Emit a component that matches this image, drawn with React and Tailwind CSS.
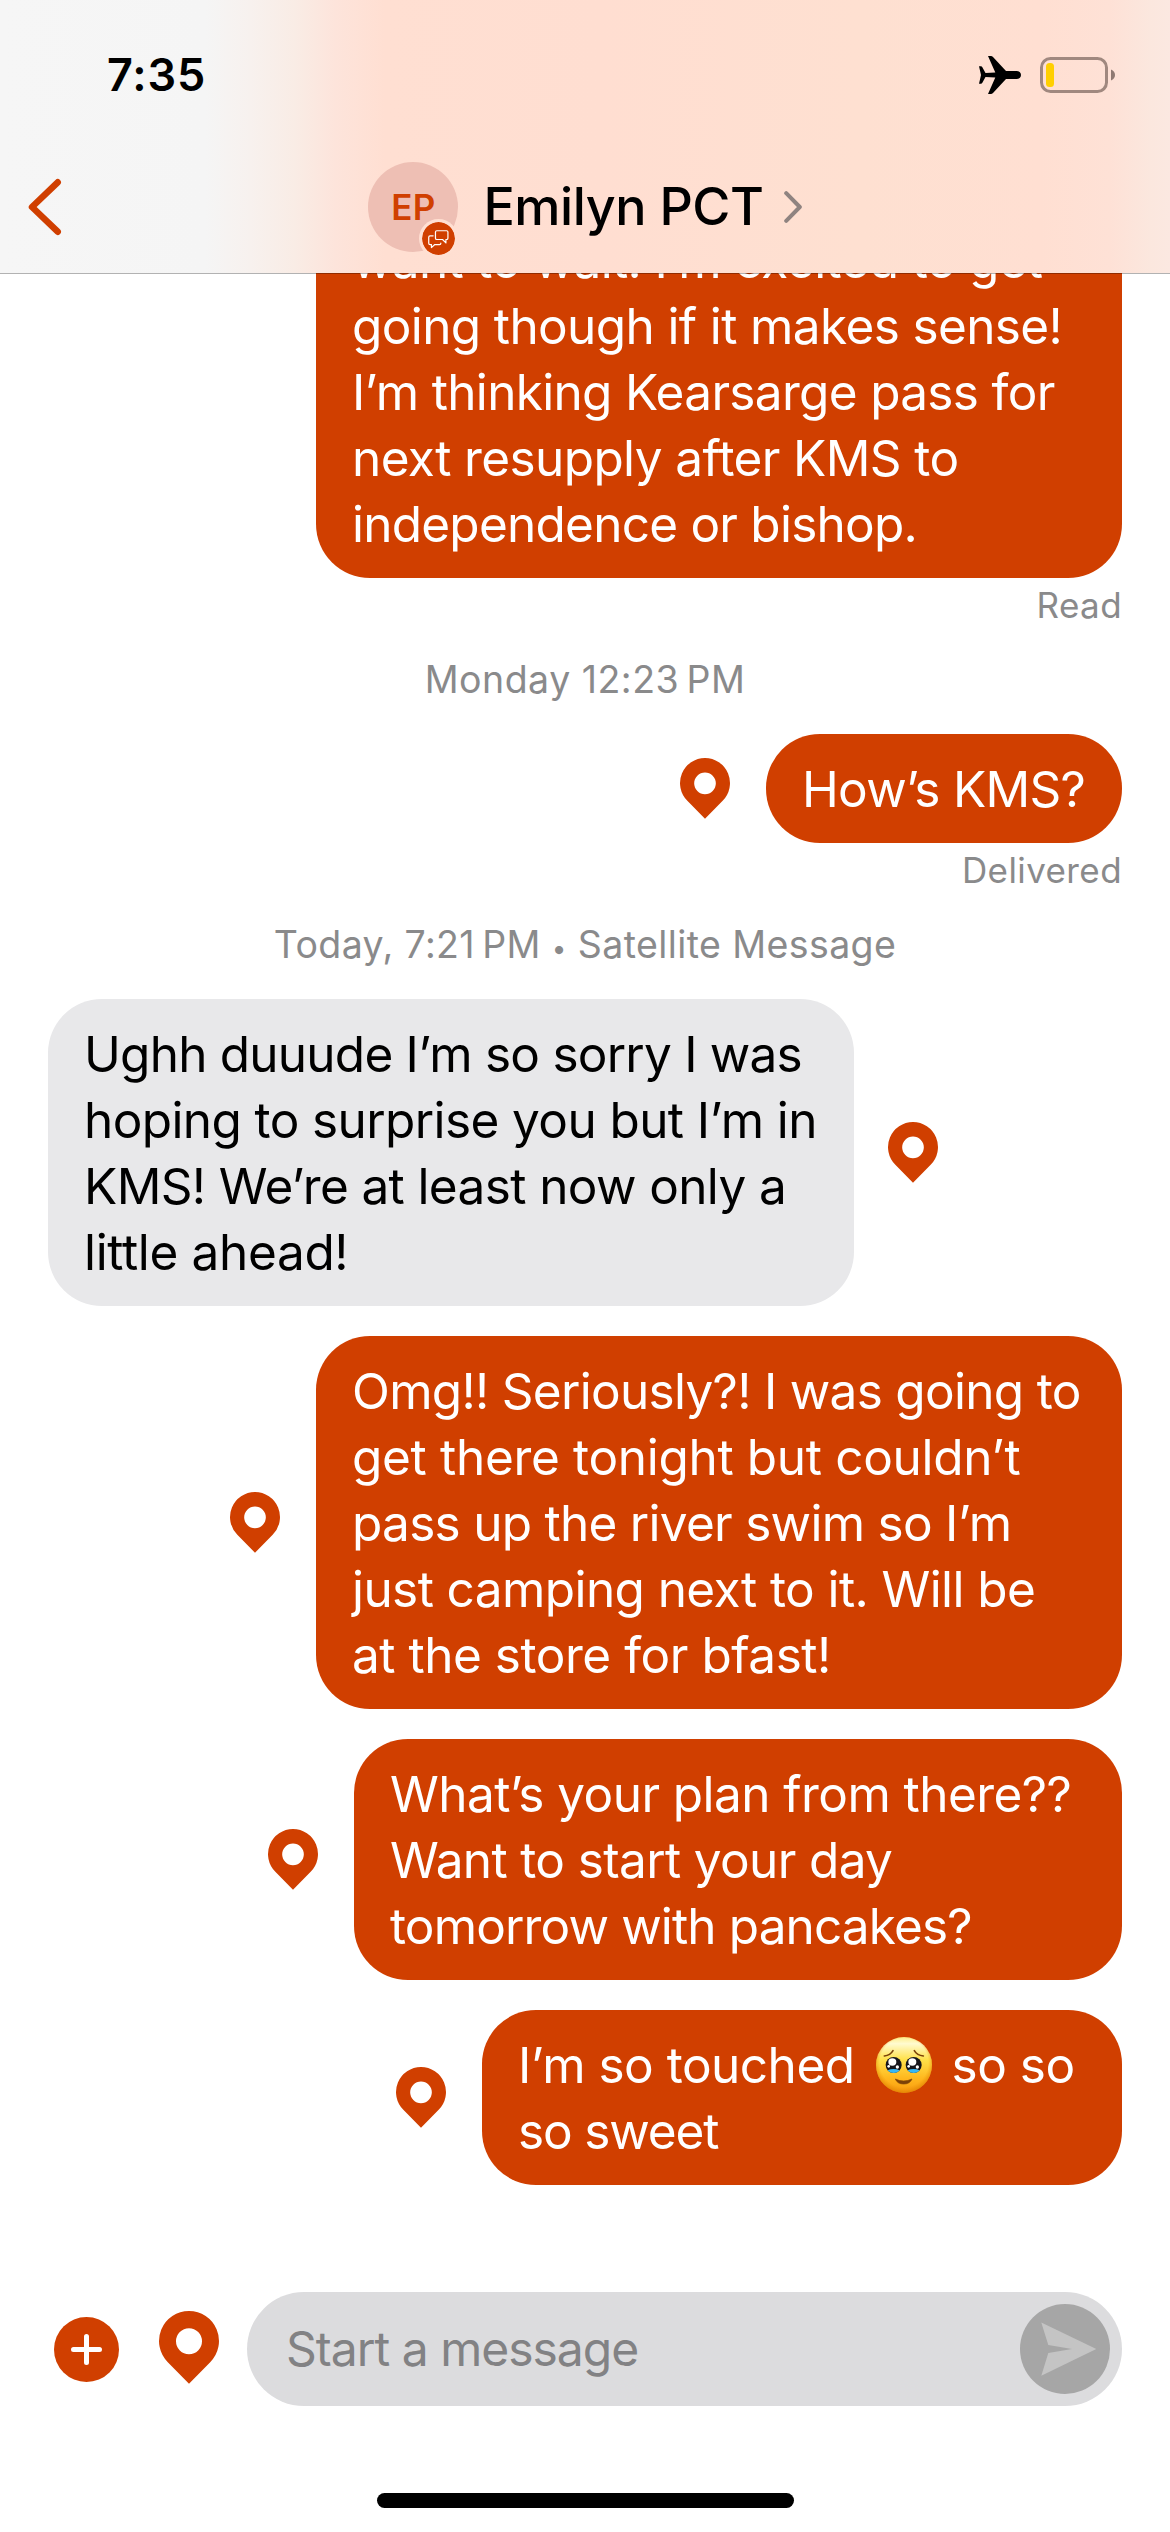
import React from 'react';
import clsx from 'clsx';

const messages = [
    {
        id: 1,
        mine: true,
        width: 'w-[806px]',
        status: 'Read',
        lines: [
            { text: 'want to wait! I’m excited to get', tracking: 'tracking-[-0.66px]' },
            { text: 'going though if it makes sense!', tracking: 'tracking-[-0.62px]' },
            { text: 'I’m thinking Kearsarge pass for', tracking: 'tracking-[-0.68px]' },
            { text: 'next resupply after KMS to', tracking: 'tracking-[-0.61px]' },
            { text: 'independence or bishop.', tracking: 'tracking-[-0.76px]' },
        ],
    },
    {
        id: 2,
        mine: true,
        pin: true,
        width: 'w-[356px]',
        stamp: ['Monday 12:23\u2009PM'],
        stampTracking: 'tracking-[0.5px]',
        status: 'Delivered',
        lines: [{ text: 'How’s KMS?', tracking: 'tracking-[-0.72px]' }],
    },
    {
        id: 3,
        mine: false,
        pin: true,
        width: 'w-[806px]',
        stamp: ['Today, 7:21\u2009PM', 'Satellite Message'],
        stampTracking: 'tracking-[0.4px]',
        lines: [
            { text: 'Ughh duuude I’m so sorry I was', tracking: 'tracking-[-0.77px]' },
            { text: 'hoping to surprise you but I’m in', tracking: 'tracking-[-0.6px]' },
            { text: 'KMS! We’re at least now only a', tracking: 'tracking-[-0.62px]' },
            { text: 'little ahead!', tracking: 'tracking-[-0.34px]' },
        ],
    },
    {
        id: 4,
        mine: true,
        pin: true,
        width: 'w-[806px]',
        lines: [
            { text: 'Omg!! Seriously?! I was going to', tracking: 'tracking-[-0.7px]' },
            { text: 'get there tonight but couldn’t', tracking: 'tracking-[-0.32px]' },
            { text: 'pass up the river swim so I’m', tracking: 'tracking-[-0.72px]' },
            { text: 'just camping next to it. Will be', tracking: 'tracking-[-0.58px]' },
            { text: 'at the store for bfast!', tracking: 'tracking-[-0.47px]' },
        ],
    },
    {
        id: 5,
        mine: true,
        pin: true,
        width: 'w-[768px]',
        lines: [
            { text: 'What’s your plan from there??', tracking: 'tracking-[-0.56px]' },
            { text: 'Want to start your day', tracking: 'tracking-[-0.63px]' },
            { text: 'tomorrow with pancakes?', tracking: 'tracking-[-0.86px]' },
        ],
    },
    {
        id: 6,
        mine: true,
        pin: true,
        width: 'w-[640px]',
        lines: [
            { text: 'I’m so touched', emoji: true, after: 'so so', tracking: 'tracking-[-0.5px]' },
            { text: 'so sweet', tracking: 'tracking-[-1.15px]' },
        ],
    },
];

const PinIcon = ({ className }) => (
    <svg viewBox="0 0 60 73" className={clsx('shrink-0', className)}>
        <path
            fill="#d03f00"
            fillRule="evenodd"
            d="M30 0A30 30 0 0 1 51.2 51.2L30 72.7L8.8 51.2A30 30 0 0 1 30 0ZM30 17.3a13 13 0 1 0 0 26a13 13 0 1 0 0-26Z"
        />
    </svg>
);

const PlaneIcon = () => (
    <svg viewBox="0 0 42 38" className="w-[42px] h-[38px]">
        <path d="M42 19C42 21.5 40 23 37.5 23H27L14 37Q13 38 12 38H9L16.3 21.6L6.5 21L3.2 27Q2.8 27.7 2 27.7H0L2 19L0 10.3H2Q2.8 10.3 3.2 11L6.5 17L16.3 16.4L9 0H12Q13 0 14 1L27 15H37.5C40 15 42 16.5 42 19Z" />
    </svg>
);

const BatteryIcon = () => (
    <svg viewBox="0 0 75 36" className="w-[75px] h-[36px]">
        <rect x="1.5" y="1.5" width="65" height="33" rx="9" fill="none" stroke="#a0887f" strokeWidth="3" />
        <rect x="6" y="6" width="8" height="24" rx="3.5" fill="#ffcf00" />
        <path d="M71 12.5C73.6 13.5 75 15.5 75 18s-1.4 4.5-4 5.5z" fill="#8f7a73" />
    </svg>
);

const ChatBadge = () => (
    <svg viewBox="0 0 98 98" className="w-[33px] h-[33px] rounded-full">
        <circle cx="49" cy="49" r="49" fill="#d03f00" />
        <g fill="none" stroke="#fff" strokeWidth="3.6" strokeLinejoin="round" strokeLinecap="round">
            <path d="M44 26h29q4 0 4 4v18q0 4-4 4h-2v10l-10-10h-17q-4 0-4-4v-18q0-4 4-4z" />
            <path d="M33 41h-9q-4 0-4 4v18q0 4 4 4h4v9l10-9h14q4 0 4-4" />
        </g>
    </svg>
);

const TearyFace = () => (
    <svg viewBox="0 0 168 168" className="w-[56px] h-[56px] ml-[21px] mr-[20px] shrink-0">
        <defs>
            <linearGradient id="face" x1="0" y1="0" x2="0" y2="1">
                <stop offset="0" stopColor="#ffee8a" />
                <stop offset="0.12" stopColor="#fffbd0" />
                <stop offset="0.4" stopColor="#ffe14a" />
                <stop offset="0.75" stopColor="#ffb61c" />
                <stop offset="1" stopColor="#f79a10" />
            </linearGradient>
            <radialGradient id="rim" cx="0.5" cy="0.46" r="0.54">
                <stop offset="0.8" stopColor="#e98a00" stopOpacity="0" />
                <stop offset="1" stopColor="#d87a00" stopOpacity="0.65" />
            </radialGradient>
            <clipPath id="leftEye"><circle cx="53" cy="84" r="24" /></clipPath>
            <clipPath id="rightEye"><circle cx="113" cy="84" r="24" /></clipPath>
        </defs>
        <circle cx="84" cy="84" r="84" fill="url(#face)" />
        <circle cx="84" cy="84" r="84" fill="url(#rim)" />
        <g fill="none" stroke="#7b4208" strokeWidth="5" strokeLinecap="round">
            <path d="M25 57Q43 55 51 41" />
            <path d="M142 57Q123 55 115 41" />
        </g>
        <circle cx="53" cy="84" r="24" fill="#15151c" />
        <circle cx="113" cy="84" r="24" fill="#15151c" />
        <g clipPath="url(#leftEye)">
            <ellipse cx="53" cy="108" rx="25" ry="12" fill="#37b8f5" />
        </g>
        <g clipPath="url(#rightEye)">
            <ellipse cx="113" cy="108" rx="25" ry="12" fill="#37b8f5" />
        </g>
        <g fill="#fff">
            <ellipse cx="49" cy="75" rx="12" ry="11" />
            <circle cx="64" cy="90" r="5" />
            <circle cx="38" cy="88" r="4" />
            <ellipse cx="109" cy="75" rx="12" ry="11" />
            <circle cx="124" cy="90" r="5" />
            <circle cx="98" cy="88" r="4" />
        </g>
        <path d="M58 126Q83 138 108 126Q102 141 83 141Q64 141 58 126Z" fill="#7b4208" stroke="#7b4208" strokeWidth="2" strokeLinejoin="round" />
    </svg>
);

const Header = () => (
    <header className="relative z-10 h-[273px] shrink-0 bg-[linear-gradient(90deg,#f6f6f6_0px,#f5f5f5_205px,#f7f1ee_250px,#f9ece5_295px,#fde4db_335px,#ffdfd2_385px,#ffded1_600px,#fee0d1_860px,#ffdfd2_1040px,#fee1d6_1110px,#fbe7de_1150px,#fbe8e1_1170px)] shadow-[0_1px_0_rgba(0,0,0,0.3)]">
        {/* Status bar */}
        <div className="flex h-[149px] items-center justify-between pl-[107px] pr-[55px]">
            <span className="text-[45px] leading-[60px] font-semibold tracking-[0.87px]">7:35</span>
            <div className="flex items-center gap-[19px]">
                <PlaneIcon />
                <BatteryIcon />
            </div>
        </div>

        {/* Contact */}
        <div className="grid h-[116px] grid-cols-[120px_1fr_120px] items-center">
            <svg viewBox="0 0 34 58" className="ml-[28px] w-[34px] h-[58px]" fill="none" stroke="#d03f00" strokeWidth="6.5" strokeLinecap="round" strokeLinejoin="round">
                <path d="M29.7 4.3L4 29L29.7 53.7" />
            </svg>
            <div className="flex items-center justify-center">
                <div className="relative flex h-[90px] w-[90px] items-center justify-center rounded-full bg-[#eebfb4]">
                    <span className="text-[35px] leading-[42px] font-semibold tracking-[0.3px] text-[#d03f00]">EP</span>
                    <div className="absolute top-[57px] left-[51px] rounded-full bg-[#ffe0d3] p-[3px]">
                        <ChatBadge />
                    </div>
                </div>
                <h1 className="ml-[25px] text-[52px] leading-[64px] font-medium tracking-[-0.45px]">Emilyn PCT</h1>
                <svg viewBox="0 0 18 32" className="ml-[20px] w-[18px] h-[32px]" fill="none" stroke="#8f8380" strokeWidth="4" strokeLinecap="round" strokeLinejoin="round">
                    <path d="M2.2 2.2L15.8 16L2.2 29.8" />
                </svg>
            </div>
        </div>
    </header>
);

const Message = ({ message }) => {
    const { mine, pin, width, lines, stamp, stampTracking, status } = message;

    return (
        <div className={clsx(!stamp && 'mt-[30px]')}>
            {stamp && (
                <p className={clsx('my-[31px] h-[46px] text-center text-[37.5px] leading-[46px] text-[#8a8a8b]', stampTracking)}>
                    {stamp[0]}
                    {stamp[1] && <> <span className="text-[26px] leading-none">•</span> {stamp[1]}</>}
                </p>
            )}
            <div className={clsx('flex items-center', mine ? 'justify-end gap-[36px]' : 'flex-row-reverse justify-end gap-[34px]')}>
                {pin && <PinIcon className="w-[50px] h-[61px]" />}
                <div
                    className={clsx(
                        'rounded-[54px] px-[36px] py-[21.5px] text-[49.5px] leading-[66px] whitespace-nowrap',
                        width,
                        mine ? 'bg-[#d03f00] text-white' : 'bg-[#e8e8ea] text-black'
                    )}
                >
                    {lines.map(line => (
                        <p key={line.text} className={clsx('flex h-[66px] items-center', line.tracking)}>
                            <span>{line.text}</span>
                            {line.emoji && <TearyFace />}
                            {line.after && <span>{line.after}</span>}
                        </p>
                    ))}
                </div>
            </div>
            {status && (
                <p className="mt-[6px] text-right text-[35px] leading-[42px] tracking-[0.4px] text-[#8a8a8b]">{status}</p>
            )}
        </div>
    );
};

const Composer = () => (
    <footer className="shrink-0">
        <div className="flex h-[114px] items-center pr-[48px] pl-[54px]">
            <svg viewBox="0 0 65 65" className="w-[65px] h-[65px]">
                <circle cx="32.5" cy="32.5" r="32.5" fill="#d03f00" />
                <path d="M32.5 19.5v26M19.5 32.5h26" stroke="#fff" strokeWidth="5" strokeLinecap="round" />
            </svg>
            <PinIcon className="mb-[3px] ml-[40px] w-[60px] h-[73px]" />
            <div className="ml-[28px] flex h-[114px] flex-1 items-center justify-between rounded-full bg-[#dcdcde] pr-[12px] pl-[39px]">
                <span className="text-[48px] leading-[60px] tracking-[-1px] text-[#828284]">Start a message</span>
                <svg viewBox="0 0 90 90" className="w-[90px] h-[90px]">
                    <circle cx="45" cy="45" r="45" fill="#a6a6a6" />
                    <path d="M21.3 18.5L76.3 45L21.3 71.7L28.3 49L52 45L28.3 41Z" fill="#c4c4c4" />
                </svg>
            </div>
        </div>
        {/* Home indicator */}
        <div className="mx-auto mt-[87px] mb-[24px] h-[15px] w-[417px] rounded-full bg-black"></div>
    </footer>
);

const App = () => (
    <div className="flex h-[2532px] w-[1170px] flex-col overflow-hidden bg-white font-['Inter','Liberation_Sans',sans-serif] text-black">
        <Header />
        <main className="flex-1 overflow-hidden px-[48px]">
            {/* Thread is scrolled, so the oldest bubble slides under the header */}
            <div className="-mt-[98px]">
                {messages.map(message => (
                    <Message key={message.id} message={message} />
                ))}
            </div>
        </main>
        <Composer />
    </div>
);

export default App;
